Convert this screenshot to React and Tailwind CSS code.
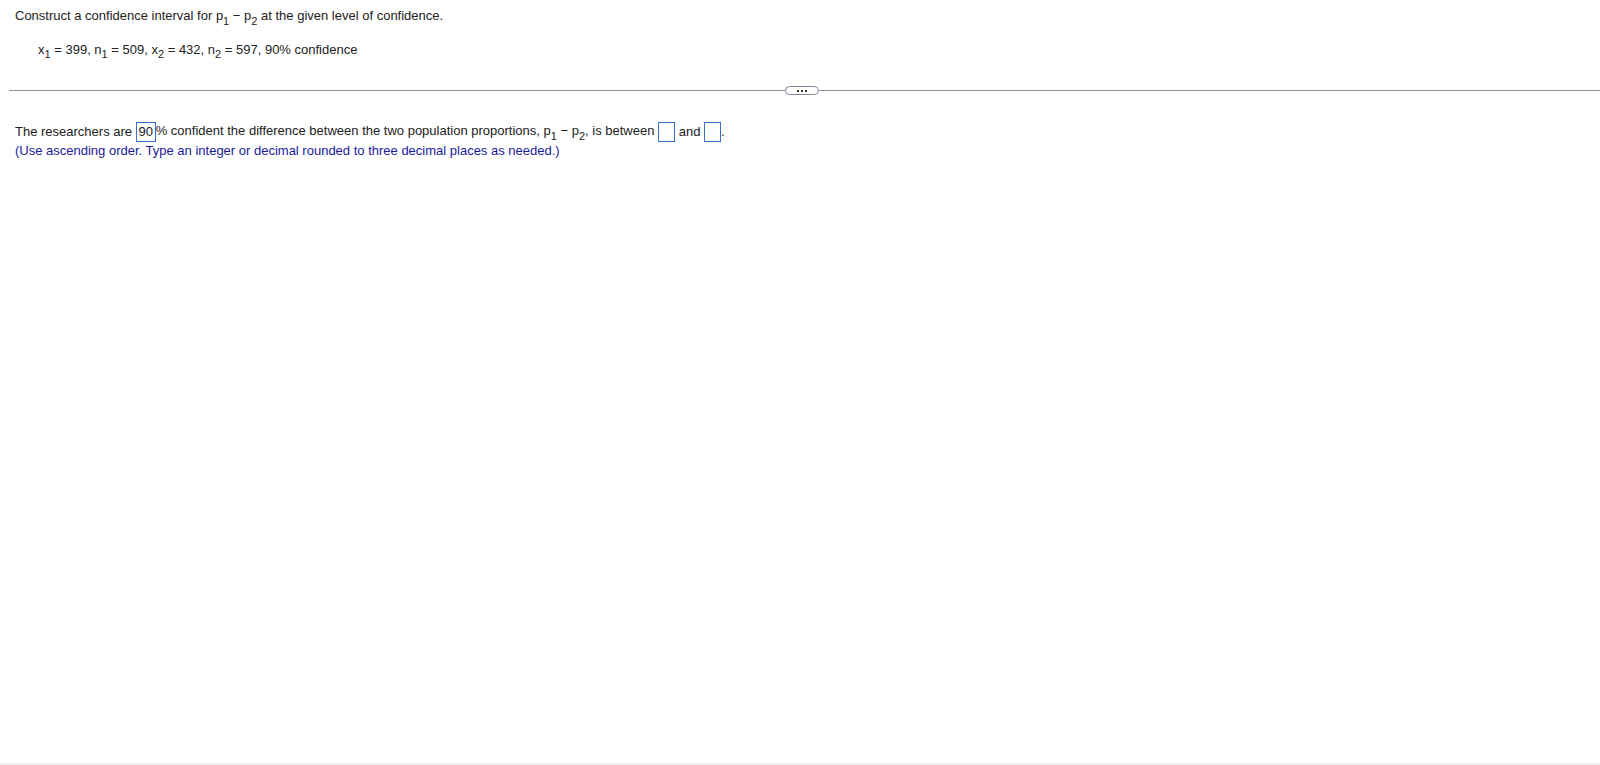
import React from "react";

const Sub = ({ children }) => (
  <sub className="text-[11px] relative top-[1px] align-sub leading-none">{children}</sub>
);

export default function App() {
  return (
    <div
      className="w-[1600px] h-[765px] flex flex-col bg-white text-[13px] text-[#222222] overflow-hidden"
      style={{ fontFamily: '"Liberation Sans", Arial, sans-serif' }}
    >
      <div className="pl-[15px] pt-[8px] leading-[16px]">
        Construct a confidence interval for p<Sub>1</Sub> − p<Sub>2</Sub> at the given level of confidence.
      </div>
      <div className="pl-[38px] mt-[16px] leading-[16px]">
        x<Sub>1</Sub> = 399, n<Sub>1</Sub> = 509, x<Sub>2</Sub> = 432, n<Sub>2</Sub> = 597, 90% confidence
      </div>
      <div className="mt-[27px] ml-[9px] flex items-center h-[9px]">
        <div className="h-px flex-1 bg-[#8a96a6]" />
        <div className="w-[34px] h-[9px] rounded-full border border-[#7d8898] bg-white flex items-center justify-center gap-[2px] shrink-0">
          <span className="w-[2px] h-[2px] bg-[#333]" />
          <span className="w-[2px] h-[2px] bg-[#333]" />
          <span className="w-[2px] h-[2px] bg-[#333]" />
        </div>
        <div className="h-px w-[781px] bg-[#8a96a6]" />
      </div>
      <div className="pl-[15px] mt-[27px] flex items-center h-[20px] leading-[16px] whitespace-pre">
        <span>The researchers are </span>
        <span className="w-[20px] h-[20px] border border-[#3a6fd0] flex items-center justify-center">90</span>
        <span>% confident the difference between the two population proportions, p<Sub>1</Sub> − p<Sub>2</Sub>, is between </span>
        <span className="w-[17px] h-[20px] border border-[#3a6fd0]" />
        <span> and </span>
        <span className="w-[17px] h-[20px] border border-[#3a6fd0]" />
        <span>.</span>
      </div>
      <div className="pl-[15px] mt-[1px] leading-[16px] text-[#1a1a9c]">
        (Use ascending order. Type an integer or decimal rounded to three decimal places as needed.)
      </div>
      <div className="mt-auto h-[2px] bg-[#efefef]" />
    </div>
  );
}
